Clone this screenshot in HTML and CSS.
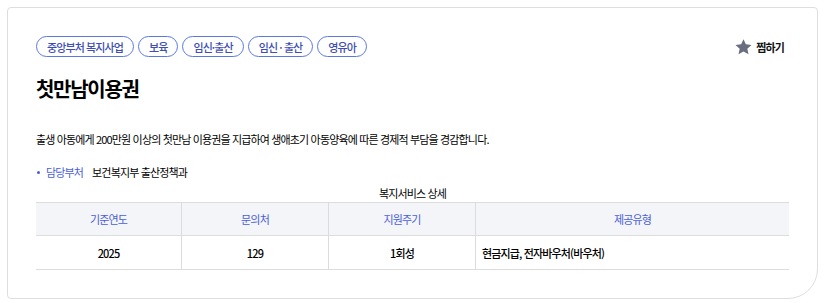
FILE: index.html
```html
<!DOCTYPE html>
<html lang="ko">
<head>
    <meta charset="UTF-8">
    <title>첫만남이용권</title>
    <link rel="stylesheet" href="styles.css">
</head>
<body>
    <div class="card">
        <!-- Tags + bookmark -->
        <div class="card-head">
            <div class="tags">
                <span class="tag">중앙부처 복지사업</span>
                <span class="tag">보육</span>
                <span class="tag">임신·출산</span>
                <span class="tag">임신 · 출산</span>
                <span class="tag">영유아</span>
            </div>
            <button class="bookmark" type="button">
                <svg width="17" height="16" viewBox="0 0 24 23" aria-hidden="true">
                    <path d="M12 0.3l3.4 7.4 8.1 0.9-6 5.5 1.7 8L12 18l-7.2 4.1 1.7-8-6-5.5 8.1-0.9z" fill="#6b6e80"/>
                </svg>
                찜하기
            </button>
        </div>

        <h1 class="title">첫만남이용권</h1>
        <p class="desc">출생 아동에게 200만원 이상의 첫만남 이용권을 지급하여 생애초기 아동양육에 따른 경제적 부담을 경감합니다.</p>

        <div class="dept">
            <span class="dept-label">담당부처</span>
            <span>보건복지부 출산정책과</span>
        </div>

        <!-- Detail table -->
        <table class="detail">
            <caption>복지서비스 상세</caption>
            <thead>
                <tr>
                    <th class="col-year">기준연도</th>
                    <th class="col-tel">문의처</th>
                    <th class="col-cycle">지원주기</th>
                    <th>제공유형</th>
                </tr>
            </thead>
            <tbody>
                <tr>
                    <td>2025</td>
                    <td>129</td>
                    <td>1회성</td>
                    <td class="left">현금지급, 전자바우처(바우처)</td>
                </tr>
            </tbody>
        </table>
    </div>
</body>
</html>
```

FILE: styles.css
```css
/* General */
body {
    margin: 0;
    padding: 7px;
    background: #fff;
    font-family: "Noto Sans CJK KR", "Noto Sans", sans-serif;
    color: #111;
}

.card {
    width: 811px;
    box-sizing: border-box;
    padding: 28px 28px 28px;
    border: 1px solid #dedede;
    border-radius: 4px 4px 30px 4px;
    background: #fff;
}

/* Head */
.card-head {
    display: flex;
    justify-content: space-between;
    align-items: center;
}

.tags {
    display: flex;
    gap: 4px;
}

.tag {
    display: inline-flex;
    align-items: center;
    height: 21px;
    box-sizing: border-box;
    padding: 0 10px;
    border: 1px solid #5b78e2;
    border-radius: 11px;
    font-size: 11px;
    font-weight: 500;
    color: #3d4db4;
    letter-spacing: -0.9px;
}

.bookmark {
    display: flex;
    align-items: center;
    gap: 4px;
    margin-right: 5px;
    padding: 0;
    border: none;
    background: none;
    font-family: inherit;
    font-size: 11px;
    font-weight: bold;
    letter-spacing: -0.85px;
    color: #111;
    cursor: pointer;
}

/* Body text */
.title {
    margin: 18px 0 0;
    font-size: 20px;
    line-height: 28px;
    font-weight: bold;
    letter-spacing: -1.3px;
    color: #000;
}

.desc {
    margin: 27px 0 0;
    font-size: 11px;
    line-height: 18px;
    color: #000;
    letter-spacing: -0.85px;
}

.dept {
    display: flex;
    gap: 9px;
    margin-top: 15px;
    font-size: 11px;
    line-height: 18px;
    letter-spacing: -0.85px;
    color: #000;
}

.dept-label {
    position: relative;
    padding-left: 10px;
    color: #4a5fd6;
}

.dept-label::before {
    content: "";
    position: absolute;
    left: 1px;
    top: 8px;
    width: 3px;
    height: 3px;
    border-radius: 50%;
    background: #4a5fd6;
}

/* Table */
.detail {
    width: 100%;
    margin-top: 3px;
    table-layout: fixed;
    border-collapse: collapse;
    font-size: 11px;
    letter-spacing: -0.85px;
}

.detail caption {
    line-height: 18px;
    color: #000;
}

.detail th,
.detail td {
    border-top: 1px solid #dcdcdc;
    border-bottom: 1px solid #dcdcdc;
    border-left: 1px solid #dcdcdc;
    text-align: center;
    padding: 0;
}

.detail th:first-child,
.detail td:first-child {
    border-left: none;
}

.detail th {
    height: 32px;
    background: #f4f5f9;
    color: #4a5fd6;
    font-weight: normal;
}

.detail td {
    height: 33px;
    color: #000;
    font-weight: 500;
}

.detail td.left {
    text-align: left;
    padding-left: 6px;
}

.col-year { width: 145px; }
.col-tel { width: 146px; }
.col-cycle { width: 146px; }
```
